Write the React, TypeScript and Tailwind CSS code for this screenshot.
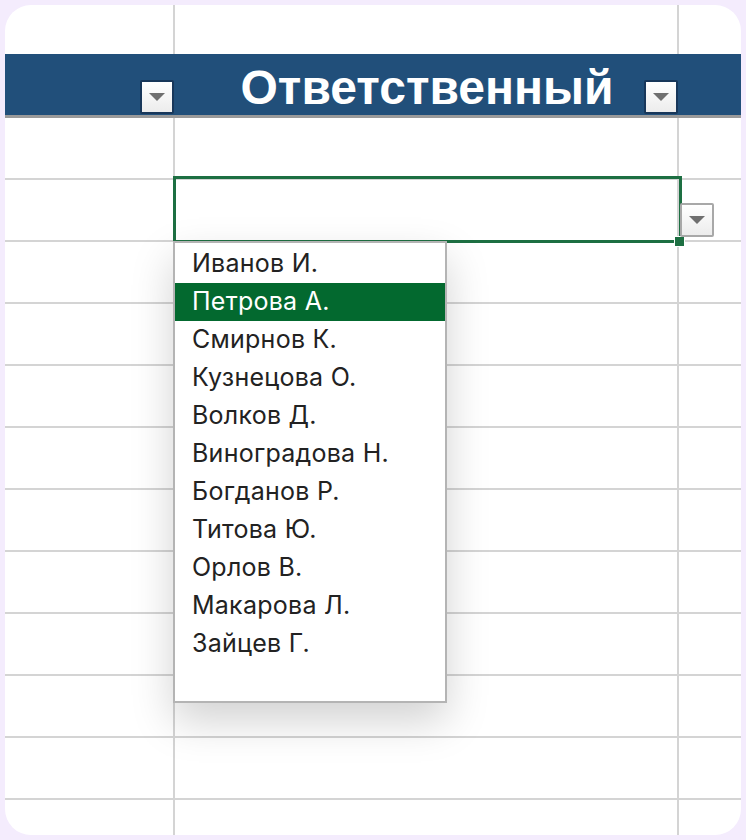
import React from "react";

const names = [
  "Иванов И.",
  "Петрова А.",
  "Смирнов К.",
  "Кузнецова О.",
  "Волков Д.",
  "Виноградова Н.",
  "Богданов Р.",
  "Титова Ю.",
  "Орлов В.",
  "Макарова Л.",
  "Зайцев Г.",
];

function FilterButton({ dark }: { dark?: boolean }) {
  return (
    <div
      className={`flex h-[34px] w-[34px] items-center justify-center rounded-[2px] border-2 bg-gradient-to-b from-white to-[#ececec] ${
        dark ? "border-[#18375a]" : "border-[#a8a8a8]"
      }`}
    >
      <svg width="18" height="10" viewBox="0 0 18 10">
        <path d="M1 1 H17 L9 9 Z" fill="#6f6f6f" />
      </svg>
    </div>
  );
}

function Row() {
  return (
    <div className="flex h-[62px] shrink-0 border-b-2 border-[#d4d4d4]">
      <div className="w-[170px] border-r-2 border-[#d4d4d4]" />
      <div className="w-[504px] border-r-2 border-[#d4d4d4]" />
      <div className="flex-1" />
    </div>
  );
}

export default function App() {
  return (
    <div className="h-[840px] w-[746px] bg-[#f4ecfd] p-[5px]" style={{ fontFamily: "Inter, 'Liberation Sans', sans-serif" }}>
      <div className="relative flex h-[830px] flex-col overflow-hidden rounded-[26px] bg-white">
        {/* top blank row */}
        <div className="flex h-[49px] shrink-0">
          <div className="w-[170px] border-r-2 border-[#d4d4d4]" />
          <div className="w-[504px] border-r-2 border-[#d4d4d4]" />
          <div className="flex-1" />
        </div>

        {/* header */}
        <div className="flex h-[64px] shrink-0 border-b-[3px] border-[#9a9a9a] bg-[#214f7a]">
          <div className="flex w-[170px] items-end justify-end pb-[1px] pr-[1px]">
            <FilterButton dark />
          </div>
          <div className="relative flex w-[504px] items-center justify-center pt-[6px]">
            <span
              className="text-[48px] font-bold leading-none text-white"
              style={{ fontFamily: "'Liberation Sans', Arial, sans-serif" }}
            >
              Ответственный
            </span>
            <div className="absolute bottom-[1px] right-[1px]">
              <FilterButton dark />
            </div>
          </div>
          <div className="flex-1" />
        </div>

        {Array.from({ length: 12 }).map((_, i) => (
          <Row key={i} />
        ))}

        {/* selected cell */}
        <div className="absolute left-[168px] top-[171px] h-[67px] w-[509px] border-[3px] border-[#1d6f42]" />
        <div className="absolute left-[669px] top-[231px] h-[11px] w-[11px] border border-white bg-[#1d6f42]" />
        <div className="absolute left-[675px] top-[198px]">
          <FilterButton />
        </div>

        {/* dropdown list */}
        <div className="absolute left-[168px] top-[236px] h-[462px] w-[274px] border-2 border-[#b4b4b4] bg-white pt-[2px] shadow-[0_18px_40px_rgba(0,0,0,0.18)]">
          {names.map((n, i) => (
            <div
              key={n}
              className={`flex h-[38px] items-center pl-[17px] text-[25px] tracking-[0.01em] ${
                i === 1 ? "bg-[#03692f] text-white" : "text-[#222222]"
              }`}
            >
              {n}
            </div>
          ))}
        </div>
      </div>
    </div>
  );
}
